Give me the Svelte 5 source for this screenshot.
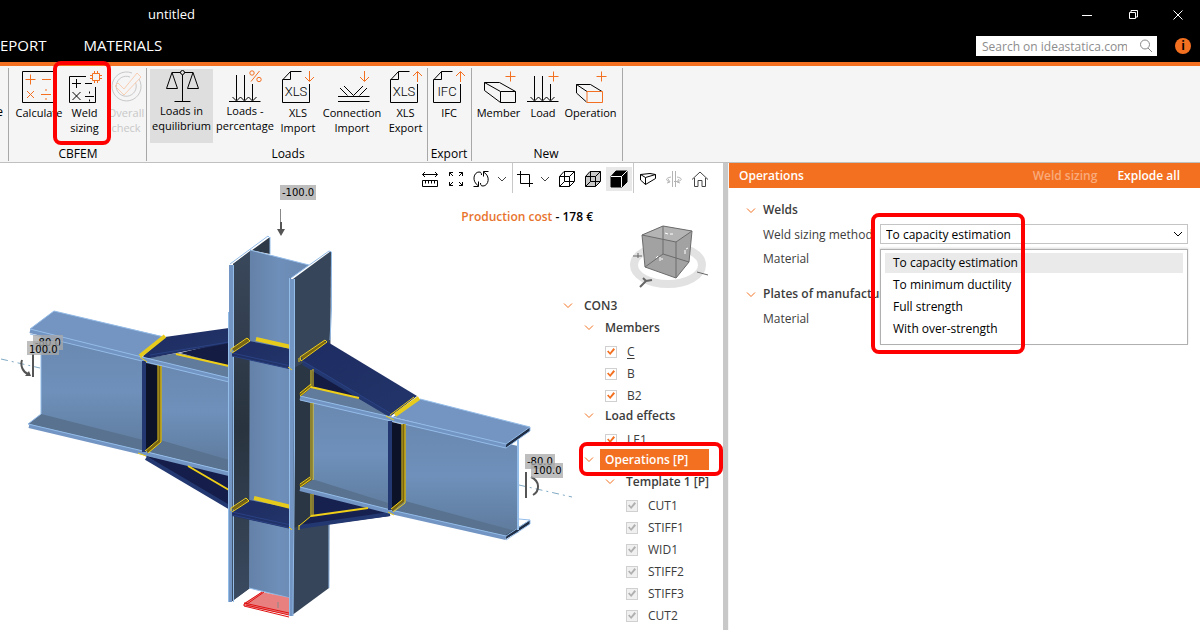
<script lang="ts">
  type Tool = { id: string; icon: string; lines: string[]; width: number; state?: "active" | "disabled"; callout?: boolean };
  type Group = { name: string; tools: Tool[] };
  type Node = { label: string; level: number; kind: "branch" | "item"; locked?: boolean; underline?: boolean; selected?: boolean };

  const groups: Group[] = [
    {
      name: "CBFEM",
      tools: [
        { id: "calculate", icon: "calculate", lines: ["Calculate"], width: 54 },
        { id: "weld", icon: "weld", lines: ["Weld", "sizing"], width: 37, callout: true },
        { id: "check", icon: "check", lines: ["Overall", "check"], width: 46, state: "disabled" },
      ],
    },
    {
      name: "Loads",
      tools: [
        { id: "equilibrium", icon: "scales", lines: ["Loads in", "equilibrium"], width: 63, state: "active" },
        { id: "percentage", icon: "percentage", lines: ["Loads -", "percentage"], width: 64 },
        { id: "xls-import", icon: "xls-down", lines: ["XLS", "Import"], width: 42 },
        { id: "con-import", icon: "connection", lines: ["Connection", "Import"], width: 66 },
        { id: "xls-export", icon: "xls-up", lines: ["XLS", "Export"], width: 41 },
      ],
    },
    {
      name: "Export",
      tools: [{ id: "ifc", icon: "ifc", lines: ["IFC"], width: 40 }],
    },
    {
      name: "New",
      tools: [
        { id: "member", icon: "member", lines: ["Member"], width: 49 },
        { id: "load", icon: "load", lines: ["Load"], width: 40 },
        { id: "operation", icon: "operation", lines: ["Operation"], width: 55 },
      ],
    },
  ];

  const viewTools = [
    { id: "measure", title: "Dimensions", width: 26 },
    { id: "fit", title: "Zoom all", width: 26 },
    { id: "rotate", title: "Rotate", width: 24 },
    { id: "chevron", title: "Rotate options", width: 18 },
    { id: "sep", title: "", width: 3 },
    { id: "crop", title: "Clip", width: 22 },
    { id: "chevron", title: "Clip options", width: 18 },
    { id: "wire", title: "Wireframe", width: 26 },
    { id: "transparent", title: "Transparent", width: 26 },
    { id: "solid", title: "Solid", width: 26 },
    { id: "sep", title: "", width: 3 },
    { id: "plate", title: "Member view", width: 26 },
    { id: "mirror", title: "Mirror", width: 26 },
    { id: "home", title: "Home", width: 26 },
  ];

  const tree: Node[] = [
    { label: "CON3", level: 0, kind: "branch" },
    { label: "Members", level: 1, kind: "branch" },
    { label: "C", level: 2, kind: "item", underline: true },
    { label: "B", level: 2, kind: "item" },
    { label: "B2", level: 2, kind: "item" },
    { label: "Load effects", level: 1, kind: "branch" },
    { label: "LE1", level: 2, kind: "item" },
    { label: "Operations [P]", level: 1, kind: "branch", selected: true },
    { label: "Template 1 [P]", level: 2, kind: "branch" },
    { label: "CUT1", level: 3, kind: "item", locked: true },
    { label: "STIFF1", level: 3, kind: "item", locked: true },
    { label: "WID1", level: 3, kind: "item", locked: true },
    { label: "STIFF2", level: 3, kind: "item", locked: true },
    { label: "STIFF3", level: 3, kind: "item", locked: true },
    { label: "CUT2", level: 3, kind: "item", locked: true },
  ];

  const methods = ["To capacity estimation", "To minimum ductility", "Full strength", "With over-strength"];

  let method = $state(methods[0]);
</script>

{#snippet chevron()}
  <svg class="chevron" viewBox="0 0 10 10" width="10" height="10" aria-hidden="true"><path d="M1 3.5L5 7.5L9 3.5" /></svg>
{/snippet}

{#snippet ribbonIcon(name: string)}
  <svg class="ribbon-icon" viewBox="0 0 40 36" width="40" height="36" aria-hidden="true">
    {#if name === "calculate"}
      <path d="M3.5 2.5H34.5V33.5H3.5Z" />
      <path class="hot" d="M6.5 10.5H16.5M11.5 5.5V15.5M23 10.5H32M8 22L15 29M15 22L8 29M22 25.5H32M27 20V22M27 29V31" />
    {:else if name === "weld"}
      <path d="M21 7.5H4.5V33.5H30.5V18M7 14.5H16M11.5 10V19M20 14.5H27M7.5 23L15.5 31M15.5 23L7.5 31M20 27.5H29M24.5 22.5V24.5M24.5 30.5V32.5" />
      <path class="hot" d="M27.5 4.5H34.5V11.5H27.5ZM29.5 2V4M32.5 2V4M29.5 12V14M32.5 12V14M25 6.5H27M25 9.5H27M35 6.5H37M35 9.5H37" />
    {:else if name === "check"}
      <path d="M26 4A14.5 14.5 0 1 0 33 10M24 8A10 10 0 1 0 29.5 13.5" />
      <path class="hot" d="M9 17L12 14L18 20L31 4L35 8L18 26Z" />
    {:else if name === "scales"}
      <path d="M20.5 6V32M12.5 32.5H28.5M10 3.5H18.5M22.5 3.5H31M10 3.5L4.5 19.5H15.5ZM31 3.5L25.5 19.5H36.5Z" />
      <circle cx="20.5" cy="3.5" r="2" />
    {:else if name === "percentage"}
      <path d="M4 32.5H35.5M11.5 6V31M19.5 6V31M27.5 15V31M7.5 28L11.5 32L15.5 28L19.5 32L23.5 28L27.5 32L31.5 28" />
      <path class="hot" d="M34.5 2L26 12.5" />
      <circle class="hot" cx="27" cy="4" r="2.2" />
      <circle class="hot" cx="34" cy="10.5" r="2.2" />
    {:else if name === "xls-down" || name === "xls-up" || name === "ifc"}
      <path d="M23.5 2.5H12.5L4.5 11V33.5H31.5V15M12.5 2.5V10.5H4.5" />
      <text x="18" y="27">{name === "ifc" ? "IFC" : "XLS"}</text>
      {#if name === "xls-down"}
        <path class="hot" d="M31.5 2V12M27 8L31.5 12.5L36 8" />
      {:else}
        <path class="hot" d="M31.5 3V13M27 7L31.5 2.5L36 7" />
      {/if}
    {:else if name === "connection"}
      <path d="M6 27.5H37.5M6 32.5H37.5M12 17L21.5 26.5L31 17M8 19L15.5 26.5M35 19L27.5 26.5" />
      <path class="hot" d="M32.5 2V12M28 8L32.5 12.5L37 8" />
    {:else if name === "member"}
      <path d="M21.5 22.5H36.5V33.5H21.5ZM5.5 13.5H20.5L36.5 22.5M5.5 13.5L21.5 22.5M5.5 13.5V21.5L21.5 33.5" />
      <path class="hot" d="M26.5 7.5H36.5M31.5 2.5V12.5" />
    {:else if name === "load"}
      <path d="M4 32.5H35.5M11.5 7V31M19.5 7V31M27.5 15V31M7.5 28L11.5 32L15.5 28L19.5 32L23.5 28L27.5 32L31.5 28" />
      <path class="hot" d="M25.5 7.5H35.5M30.5 2.5V12.5" />
    {:else if name === "operation"}
      <path d="M5.5 15.5H19.5L31 22.5M5.5 15.5L16 22.5M5.5 15.5V24L15.5 33" />
      <path class="hot" d="M16 22.5H31.5V33.5H16ZM25.5 7.5H35.5M30.5 2.5V12.5" />
    {/if}
  </svg>
{/snippet}

{#snippet viewIcon(name: string)}
  <svg viewBox="0 0 18 18" width="18" height="18" aria-hidden="true">
    {#if name === "measure"}
      <path d="M1.5 4.5H16.5M4 2L1.5 4.5L4 7M14 2L16.5 4.5L14 7M1.5 10.5H16.5V16.5H1.5ZM4.5 11V13.5M7.5 11V13.5M10.5 11V13.5M13.5 11V13.5" />
    {:else if name === "fit"}
      <path d="M2.5 6V2.5H6M12 2.5H15.5V6M15.5 12V15.5H12M6 15.5H2.5V12M2.5 2.5L6 6M15.5 2.5L12 6M15.5 15.5L12 12M2.5 15.5L6 12" />
    {:else if name === "rotate"}
      <path d="M1.5 16.5H6.5V11.5M6.5 16C-1 11 2 2 7 2C9 2 9.500 3 9.500 5M16.500 1.500H11.500V6.500M11.500 2C19 6 16.500 16 11 16C9 16 8.500 15 8.500 13" />
    {:else if name === "chevron"}
      <path class="grey" d="M5 7L9 11L13 7" />
    {:else if name === "crop"}
      <path d="M4.5 1V13.5H17M1 4.5H13.5V17" />
    {:else if name === "wire"}
      <path d="M1.5 6.5H11.5V16.5H1.5ZM1.5 6.5L6 1.5H16.5L11.5 6.5M16.5 1.5V11.5L11.5 16.5M6.5 2V11.5H16M6.5 11.5L1.5 16.5" />
    {:else if name === "transparent"}
      <path class="shade" d="M1.5 6.5L6 1.5H16.5V11.5L11.5 16.5H1.5Z" />
      <path d="M1.5 6.5H11.5V16.5M11.5 6.5L16.5 1.5M6.5 2V11.5H16M6.5 11.5L1.5 16.5" />
    {:else if name === "solid"}
      <path class="black" d="M1 6.5L6 1H17V12L12 17H1Z" />
      <path class="white" d="M1 6.5H11.5V17M11.5 6.5L17 1" />
    {:else if name === "plate"}
      <path d="M1.5 4.5L11 3.5L16.5 4.5L6.5 7.5ZM1.5 4.5V10L6.5 14.5V7.5M16.5 4.5V8.5L6.5 14.5" />
    {:else if name === "mirror"}
      <path class="faint" d="M7.5 1V17M10.5 1V17M6 7C1 8 0 10 4 11.5M3 9L5 12L2 13M12 7C17 8 18 10 13 11.5M12 11.5H9M14 9L12 12L15 13" />
    {:else if name === "home"}
      <path class="grey" d="M1 9.5L9 2L17 9.5M3.5 8V16.5H7V10.5H11V16.5H14.5V8" />
    {/if}
  </svg>
{/snippet}

<div class="app">
  <header>
    <div class="title-row">
      <span class="title">untitled</span>
      <div class="window-buttons">
        <button aria-label="Minimize"><svg viewBox="0 0 10 10" width="10" height="10"><path d="M0 5.5H10" /></svg></button>
        <button aria-label="Restore"><svg viewBox="0 0 10 10" width="10" height="10"><path d="M1.5 2.5H7.5V8.5H1.5ZM3 2V.5H9.5V7H8" /></svg></button>
        <button aria-label="Close"><svg viewBox="0 0 10 10" width="10" height="10"><path d="M.5 .5L9.5 9.5M9.5 .5L.5 9.5" /></svg></button>
      </div>
    </div>
    <div class="tab-row">
      <nav>
        <a href="#report">EPORT</a>
        <a href="#materials">MATERIALS</a>
      </nav>
      <label class="search">
        <input type="search" placeholder="Search on ideastatica.com" aria-label="Search on ideastatica.com" />
        <svg viewBox="0 0 14 14" width="14" height="14" aria-hidden="true"><circle cx="6" cy="5.5" r="4.5" /><path d="M9 9L13 13" /></svg>
      </label>
      <button class="info" aria-label="Information">i</button>
    </div>
  </header>

  <div class="ribbon">
    <div class="group stub"><div class="tools"><span>e</span></div></div>
    {#each groups as group}
      <section class="group">
        <div class="tools">
          {#each group.tools as tool}
            <button
              class="tool {tool.state ?? ''}"
              class:raised={tool.icon === "scales" || tool.icon === "percentage"}
              style:width="{tool.width}px"
              disabled={tool.state === "disabled"}
            >
              {@render ribbonIcon(tool.icon)}
              {#each tool.lines as line}
                <span>{line}</span>
              {/each}
              {#if tool.callout}<i class="callout callout-weld"></i>{/if}
            </button>
          {/each}
        </div>
        <div class="group-name">{group.name}</div>
      </section>
    {/each}
  </div>

  <main>
    <div class="viewport">
      <svg class="scene" viewBox="0 163 580 467" width="580" height="467" role="img" aria-label="Steel connection model">
        <defs>
          <linearGradient id="web" x1="0" y1="0" x2="1" y2="0">
            <stop offset="0" stop-color="#6481a8" />
            <stop offset="0.5" stop-color="#6e8fb9" />
            <stop offset="1" stop-color="#6988b2" />
          </linearGradient>
          <linearGradient id="beam" x1="0" y1="0" x2="0" y2="1">
            <stop offset="0" stop-color="#6a88b0" />
            <stop offset="0.5" stop-color="#6e90ba" />
            <stop offset="1" stop-color="#5f7b9d" />
          </linearGradient>
          <linearGradient id="flange" x1="0" y1="0" x2="0" y2="1">
            <stop offset="0" stop-color="#3a485c" />
            <stop offset="0.5" stop-color="#29333f" />
            <stop offset="1" stop-color="#3a4a60" />
          </linearGradient>
          <linearGradient id="navy" x1="0" y1="0" x2="1" y2="1">
            <stop offset="0" stop-color="#1e2c62" />
            <stop offset="1" stop-color="#22356a" />
          </linearGradient>
        </defs>

        <path class="axis" d="M1 359L40 368M519 485L572 497" />

        <!-- left beam -->
        <path fill="url(#beam)" d="M41 333L142 358V451L41 415Z" />
        <path fill="#58728f" d="M41 414L28 424L143 453V440Z" />
        <path class="steel" d="M30 329L54 311L165 337L140 357Z" />
        <path fill="url(#beam)" d="M145 359L229 380V464L145 445Z" />
        <path fill="#617b9c" d="M147 358L178 353L229 364V382Z" />
        <path fill="#58728f" d="M160 440L229 460V472L147 452Z" />
        <path fill="#141c44" d="M180 353L229 341V366Z" />
        <path class="navy" d="M165 337L229 328V343L145 359L143 356Z" />
        <path class="navy-edge" d="M150 355L229 342" />
        <path fill="#151e4b" d="M144 455L229 474V508Z" />
        <path class="navy-band" d="M146 458L229 507" />
        <path class="rim" d="M30 331L142 359L229 380M29 426L143 453L229 474" />
        <path class="rim-light" d="M30 329L142 357L229 378M30 334L142 361L229 382M28 424L143 451L229 472M41 340V414M30 329L54 311L164 337M28 424L41 414" />
        <path fill="#0c1227" d="M146 363L159 366V440L146 451Z" />
        <path class="navy-band" d="M144 361V452" />
        <path class="weld-dark" d="M160 366V441L147 452" />
        <path class="weld" d="M158 365V440L145 451M161 366V442L148 453" />
        <path class="weld bold" d="M140 356L165 336" />
        <path class="weld thick" d="M176 354L229 366M188 466L229 490" />
        <path class="weld" d="M138 453L146 456M140 357L147 362" />

        <!-- column back flange and web -->
        <path fill="#2e3948" d="M233 264L270 237V254L250 250V588L231 602Z" />
        <path fill="url(#flange)" d="M233 264L250 251V588L231 602Z" />
        <path fill="url(#web)" d="M250 250L309 265L291 278V599L249 588Z" />
        <path class="rim-light" d="M250 250L309 265M270 237V254M249 588L290 598" />
        <path class="rim wide" d="M231 265V350L230 602" />
        <path class="rim-light" d="M228.5 312V602M233.5 265V602M230 264L268 236L270 238" />

        <!-- column base plate -->
        <path class="base" d="M244 603L262 592L290 598V615L244 606Z" />
        <path class="base-edge" d="M262 592L244 604V606L289 617M244 603L289 613M246 605L289 615M264 592L247 604" />
        <path class="symbol thin" d="M278 602V608" />

        <!-- stiffeners -->
        <path class="navy" d="M232 353L249 341L291 349V369L232 356Z" />
        <path class="navy-edge" d="M232 353L291 366M232 356L291 369" />
        <path class="navy" d="M232 512L249 500L291 508V529L232 516Z" />
        <path class="navy-edge" d="M232 512L291 525M232 515L291 528" />
        <path class="weld bold" d="M256 339L291 347M254 498L291 507" />
        <path class="weld-dark" d="M233 350L249 339M233 509L248 500" />
        <path class="weld" d="M231 352V349L247 338L250 341L232 353M231 511V508L246 498L249 501L232 512" />

        <!-- column front flange -->
        <path fill="#36455a" d="M293 279L331 251L329 588L291 616Z" />
        <path fill="#28323f" opacity="0.8" d="M294 368L312 358V520L294 528Z" />
        <path class="rim wide" d="M292 279V400L291 616" />
        <path class="rim-light" d="M289.5 278V616M294.5 279V450L293 616M291 278L329 251L331.5 252V310L330 340M329 524V588" />

        <!-- right beam -->
        <path fill="#141c44" d="M312 369L392 418L358 400L312 388Z" />
        <path fill="url(#beam)" d="M313 398L388 416V512L313 482Z" />
        <path fill="#617b9c" d="M300 396L311 387L358 398L392 417L390 420Z" />
        <path fill="#58728f" d="M300 488L312 479L388 503V511Z" />
        <path class="navy" d="M300 360L326 341L417 396L391 416Z" />
        <path class="navy-band" d="M303 363L390 415" />
        <path class="navy-edge" d="M301 360L390 413" />
        <path fill="#172150" d="M312 493L388 511L390 516L299 528L312 516Z" />
        <path class="navy-band" d="M299 527L390 514" />
        <path fill="url(#beam)" d="M404 420L518 446V533L404 503Z" />
        <path fill="#58728f" d="M393 511L405 501L519 532L506 538Z" />
        <path class="steel" d="M393 417L420 399L530 427L506 445Z" />
        <path fill="#202e45" d="M506 444L530 427V431L506 448ZM506 535L530 520V524L506 539Z" />
        <path class="rim" d="M300 398L391 419L506 446M300 489L391 512L506 538" />
        <path class="rim-light" d="M300 396L391 417L506 444L530 427L420 399M300 400L391 421L506 448M300 487L391 510L506 536L530 520L519 519M506 448L530 431M506 540L530 524M530 427V431M530 520V524" />
        <path class="rim slim" d="M518 440V530" />
        <path fill="#0c1227" d="M392 422L404 425V500L392 511Z" />
        <path class="navy-band" d="M390 421V510" />
        <path class="weld-dark" d="M404 424V500L392 510M300 395L311 386M300 486L311 479" />
        <path class="weld" d="M402 424V500L391 509M405 424V503L393 512M311 370V387L300 396M313 369V386M300 393L311 384M311 403V479L300 487M313 403V480M300 484L310 477M311 494V516L299 526M313 494V515" />
        <path class="weld thick" d="M311 387L359 398M311 516L368 508" />
        <path class="weld bold" d="M395 415L419 398" />
        <path class="weld" d="M390 415L414 397" />
        <path class="weld-dark" d="M302 358L325 342" />
        <path class="weld" d="M300 357L325 340L327 342L301 361Z" />
        <path class="weld" d="M288 367L292 370M289 527L292 530M299 358V362M299 525V530M386 416L394 420M388 512L394 515" />

        <!-- load symbols -->
        <path class="symbol thin" d="M280.5 209V230" />
        <path class="symbol" d="M281 222V230M33 354V377M22 360C20 366 23 372 28 374M526 472V498" />
        <path class="symbol" d="M531 477C540 481 540 491 533 495" />
        <path class="symbol-fill" d="M277 229H285L281 236ZM25 376L31 376L29 371Z" />
        <g class="tag">
          <rect x="280" y="185" width="36" height="15" /><text x="282" y="196">-100.0</text>
          <rect x="33" y="335" width="30" height="15" /><text x="35" y="346">-80.0</text>
          <rect x="27" y="341" width="32" height="14" /><text x="29" y="353">100.0</text>
          <rect x="525" y="454" width="30" height="15" /><text x="527" y="465">-80.0</text>
          <rect x="531" y="463" width="32" height="15" /><text x="533" y="474">100.0</text>
        </g>
      </svg>

      <div class="overlay">
        <div class="view-tools">
          {#each viewTools as tool}
            {#if tool.id === "sep"}
              <span class="sep"></span>
            {:else}
              <button class:active={tool.id === "solid"} style:width="{tool.width}px" aria-label={tool.title}>{@render viewIcon(tool.id)}</button>
            {/if}
          {/each}
        </div>
        <p class="cost"><span>Production cost</span> - 178 €</p>
        <svg class="cube" viewBox="0 0 84 68" width="84" height="68" aria-hidden="true">
          <ellipse class="ring" cx="40" cy="40" rx="34" ry="19" />
          <path class="face" d="M14 10L35 1L64 6L61 37L48 53L17 42Z" />
          <path class="face-top" d="M14 10L35 1L64 6L48 17Z" />
          <path class="edge" d="M14 10L35 1L64 6L48 17ZM14 10L17 42L48 53V17M48 53L61 37L64 6M35 1V29L17 42M35 29L61 37" />
          <path class="glint" d="M37 8L40 9M42 9H45M28 33L30 31M32 32V36M33 34H35M57 25V29M58 24L60 23" />
          <path class="mark" d="M5 31H14M10 28V33M69 47L80 50" />
          <path class="mark heavy" d="M12 62L18 56L24 55M15 53L18 56" />
        </svg>
        <ul class="tree">
          {#each tree as node}
            <li class={node.kind} class:selected={node.selected} style:padding-left="{node.level * 21}px">
              {#if node.kind === "branch"}
                {@render chevron()}
                <button class="branch-name">{node.label}</button>
              {:else}
                <label>
                  <input type="checkbox" checked disabled={node.locked} />
                  <span class:underline={node.underline}>{node.label}</span>
                </label>
              {/if}
              {#if node.selected}<i class="callout callout-operations"></i>{/if}
            </li>
          {/each}
        </ul>
      </div>
    </div>

    <div class="splitter"></div>

    <aside>
      <div class="panel-head">
        <h2>Operations</h2>
        <button disabled>Weld sizing</button>
        <button>Explode all</button>
      </div>
      <div class="form">
        <h3>{@render chevron()}Welds</h3>
        <div class="field">
          <label for="method">Weld sizing method</label>
          <div class="combo">
            <select id="method" bind:value={method}>
              {#each methods as name}
                <option>{name}</option>
              {/each}
            </select>
            <svg viewBox="0 0 10 10" width="10" height="10" aria-hidden="true"><path d="M1 3L5 7L9 3" /></svg>
            <div class="popup" role="listbox" aria-label="Weld sizing method">
              {#each methods as name}
                <button role="option" aria-selected={name === method} onclick={() => (method = name)}>{name}</button>
              {/each}
            </div>
            <i class="callout callout-method"></i>
          </div>
        </div>
        <div class="field"><span>Material</span></div>
        <h3 class="second">{@render chevron()}Plates of manufacturing</h3>
        <div class="field"><span>Material</span></div>
      </div>
    </aside>
  </main>
</div>

<style>
  :global(body) {
    margin: 0;
    background: #fff;
  }

  .app {
    display: flex;
    flex-direction: column;
    min-height: 100vh;
    overflow: hidden;
    font-family: "Open Sans", "Noto Sans", sans-serif;
    font-size: 12px;
    line-height: 15px;
    color: #000;
  }

  .app *,
  .app *::before {
    box-sizing: border-box;
  }

  button {
    padding: 0;
    border: 0;
    background: none;
    color: inherit;
    font: inherit;
  }

  svg {
    fill: none;
    stroke: currentColor;
    flex: none;
  }

  header {
    background: #000;
    border-bottom: 4px solid #f37021;
    color: #fff;
  }

  .title-row {
    display: flex;
    justify-content: space-between;
    align-items: center;
    height: 30px;
    padding-left: 148px;
  }

  .title {
    padding-bottom: 2px;
    font-size: 13px;
  }

  .window-buttons {
    display: flex;
  }

  .window-buttons button {
    display: grid;
    place-items: center;
    width: 46px;
    height: 30px;
  }

  .window-buttons button:last-child {
    width: 44px;
  }

  .tab-row {
    display: flex;
    align-items: center;
    height: 32px;
    padding-right: 9px;
  }

  nav {
    display: flex;
    flex: 1;
    gap: 37px;
    padding-bottom: 2px;
  }

  nav a {
    color: #fff;
    font-size: 15px;
    line-height: 20px;
    text-decoration: none;
  }

  .search {
    display: flex;
    align-items: center;
    width: 181px;
    height: 20px;
    margin-right: 18px;
    padding: 0 4px 0 6px;
    background: #fff;
    color: #888;
  }

  .search input {
    flex: 1;
    min-width: 0;
    padding: 0;
    border: 0;
    outline: 0;
    background: none;
    font: inherit;
  }

  .search input::placeholder {
    color: #8c8c8c;
    opacity: 1;
  }

  .info {
    width: 16px;
    height: 16px;
    border-radius: 50%;
    background: #f37021;
    color: #000;
    font-weight: 700;
    line-height: 16px;
  }

  .ribbon {
    display: flex;
    height: 97px;
    background: #f5f5f5;
    border-bottom: 1px solid #c0c0c0;
  }

  .group {
    position: relative;
    display: flex;
    flex-direction: column;
    justify-content: space-between;
    margin: 2px 0 1px;
    padding: 1px 2px 0 3px;
    border-right: 1px solid #a8a8a8;
  }

  .group:nth-child(2) {
    width: 138px;
  }

  .group:nth-child(3) {
    padding-right: 1px;
  }

  .group:nth-child(4) {
    padding: 1px 2px 0 1px;
  }

  .group:nth-child(5) {
    padding: 1px 4px 0 2px;
  }

  .group.stub {
    width: 9px;
    padding: 36px 0 0;
  }

  .tools {
    display: flex;
  }

  .stub .tools {
    justify-content: flex-end;
    width: 3px;
  }

  .tool {
    position: relative;
    display: flex;
    flex: none;
    flex-direction: column;
    align-items: center;
    height: 74px;
    font-size: 11px;
    white-space: nowrap;
  }

  .tool.active {
    background: #dedede;
  }

  .tool.disabled {
    color: #c8c8c8;
  }

  .raised .ribbon-icon {
    margin-bottom: -2px;
  }

  .hot {
    stroke: #f37021;
  }

  .disabled .hot {
    stroke: #f9cdb2;
  }

  .ribbon-icon text {
    fill: #000;
    stroke: none;
    font-family: Roboto, sans-serif;
    font-size: 13px;
    font-weight: 300;
    text-anchor: middle;
  }

  .group-name {
    text-align: center;
    line-height: 15px;
  }

  .callout {
    position: absolute;
    z-index: 5;
    border: 4px solid #f00;
    border-radius: 8px;
    pointer-events: none;
  }

  .callout-weld {
    inset: -8px -8px -2px -13px;
  }

  .callout-operations {
    inset: -6px 0 -6px 16px;
  }

  .callout-method {
    top: -11px;
    left: -9px;
    width: 154px;
    height: 141px;
  }

  main {
    display: grid;
    flex: 1;
    grid-template-columns: minmax(0, 723fr) 6px minmax(0, 471fr);
  }

  .viewport {
    position: relative;
    background: #fff;
  }

  .scene {
    position: absolute;
    top: 0;
    left: 0;
    stroke: none;
  }

  .scene path {
    stroke-linejoin: round;
  }

  .steel {
    fill: #7495c1;
  }

  .navy {
    fill: url(#navy);
  }

  .navy-edge {
    stroke: #2a4183;
  }

  .navy-band {
    stroke: #233871;
    stroke-width: 4;
  }

  .rim {
    stroke: #7295c3;
    stroke-width: 4;
  }

  .rim.slim {
    stroke: #94bce8;
    stroke-width: 2;
  }

  .rim-light {
    stroke: #94bce8;
  }

  .weld {
    stroke: #f0cf18;
    stroke-width: 1;
  }

  .weld.thick {
    stroke-width: 2;
  }

  .weld.bold {
    stroke: #e6cb1c;
    stroke-width: 4;
  }

  .weld-dark {
    stroke: #7a6510;
    stroke-width: 3;
  }

  .axis {
    stroke: #7fa9c4;
    stroke-dasharray: 7 4 2 4;
  }

  .base {
    fill: #e88080;
  }

  .base-edge {
    stroke: #e01010;
  }

  .symbol {
    stroke: #555;
    stroke-width: 2;
  }

  .symbol.thin {
    stroke: #888;
    stroke-width: 1;
  }

  .symbol-fill {
    fill: #555;
  }

  .tag rect {
    fill: #a8a8a8;
    fill-opacity: 0.75;
  }

  .tag text {
    fill: #000;
    font-family: "DejaVu Sans", sans-serif;
    font-size: 10px;
  }

  .overlay {
    position: relative;
    display: flex;
    flex-direction: column;
    align-items: flex-end;
  }

  .view-tools {
    display: flex;
    height: 32px;
    padding-right: 10px;
  }

  .view-tools button {
    display: grid;
    place-items: center;
    height: 24px;
    margin-top: 4px;
    overflow: hidden;
  }

  .view-tools button.active {
    background: #e8e8e8;
  }

  .sep {
    width: 1px;
    height: 30px;
    margin: 0 1px;
    background: #c8c8c8;
  }

  .grey {
    stroke: #444;
  }

  .faint {
    stroke: #b4b4b4;
  }

  .shade {
    fill: #c8c8c8;
  }

  .black {
    fill: #000;
  }

  .white {
    stroke: #fff;
  }

  .cost {
    margin: 14px 130px 0 0;
    font-weight: 600;
    line-height: 16px;
  }

  .cost span {
    color: #e8732c;
  }

  .cube {
    margin-right: 11px;
  }

  .ring {
    stroke: #e2e2e2;
    stroke-width: 8;
  }

  .face {
    fill: #a2a2a2;
    stroke: none;
  }

  .face-top {
    fill: #b4b4b4;
    stroke: none;
  }

  .edge {
    stroke: #6c6c6c;
  }

  .glint {
    stroke: #fff;
  }

  .mark {
    stroke: #666;
  }

  .mark.heavy {
    stroke-width: 2;
  }

  .tree {
    width: 160px;
    margin: 1px 0 0;
    padding: 0;
    list-style: none;
    color: #3c3c3c;
  }

  .tree li {
    position: relative;
    display: flex;
    align-items: center;
    height: 22px;
  }

  .tree li.item {
    padding-top: 5px;
  }

  .chevron {
    width: 10px;
    stroke: #f37021;
  }

  .branch-name {
    margin-left: 6px;
    padding-left: 5px;
    font-weight: 600;
    line-height: 21px;
    text-align: left;
    white-space: nowrap;
  }

  .selected .branch-name {
    flex: 1;
    margin-right: 14px;
    background: #f37021;
    color: #fff;
  }

  .tree label {
    display: flex;
    align-items: center;
    gap: 10px;
  }

  .tree input {
    appearance: none;
    width: 12px;
    height: 12px;
    margin: 0;
    border: 1px solid #d0d0d0;
    background: #fff;
  }

  .tree input:checked::before {
    content: "";
    display: block;
    width: 10px;
    height: 10px;
    background: #f37021;
    clip-path: polygon(10% 50%, 25% 40%, 40% 60%, 75% 15%, 90% 30%, 42% 85%);
  }

  .tree input:disabled {
    background: #f0f0f0;
  }

  .tree input:disabled::before {
    background: #b0b0b0;
  }

  .underline {
    text-decoration: underline;
    text-underline-offset: 2px;
  }

  .splitter {
    background: #c8c8c8;
    border-right: 1px solid #f5f5f5;
  }

  .panel-head {
    display: flex;
    align-items: center;
    gap: 20px;
    height: 25px;
    padding: 0 20px 0 10px;
    background: #f37021;
    color: #fff;
    font-weight: 600;
  }

  .panel-head h2 {
    flex: 1;
    margin: 0;
    font-size: 12px;
    font-weight: 600;
  }

  .panel-head button:disabled {
    color: #f9ab7c;
  }

  .form {
    padding: 9px 12px 0 17px;
    color: #3c3c3c;
  }

  .form h3 {
    display: flex;
    align-items: center;
    gap: 7px;
    height: 25px;
    margin: 0;
    font-size: 12px;
    font-weight: 600;
    white-space: nowrap;
  }

  .form h3.second {
    margin-top: 11px;
  }

  .field {
    display: flex;
    align-items: center;
    height: 24px;
    padding-left: 17px;
  }

  .field > label,
  .field > span {
    width: 117px;
    white-space: nowrap;
  }

  .combo {
    position: relative;
    flex: 1;
    height: 20px;
    color: #000;
  }

  .combo select {
    appearance: none;
    display: block;
    width: 100%;
    height: 20px;
    padding: 0 5px;
    border: 1px solid #c4c4c4;
    border-radius: 0;
    background: #fff;
    color: #000;
    font: inherit;
  }

  .combo > svg {
    position: absolute;
    top: 5px;
    right: 5px;
  }

  .popup {
    position: absolute;
    top: 25px;
    left: 0;
    right: 0;
    z-index: 2;
    padding: 3px 4px;
    border: 1px solid #b0b0b0;
    background: #fff;
    box-shadow: 0 -1px 2px rgba(0, 0, 0, 0.15);
  }

  .popup button {
    display: block;
    width: 100%;
    margin-bottom: 2px;
    padding-left: 8px;
    line-height: 20px;
    text-align: left;
  }

  .popup button[aria-selected="true"] {
    background: #eaeaea;
  }
</style>
